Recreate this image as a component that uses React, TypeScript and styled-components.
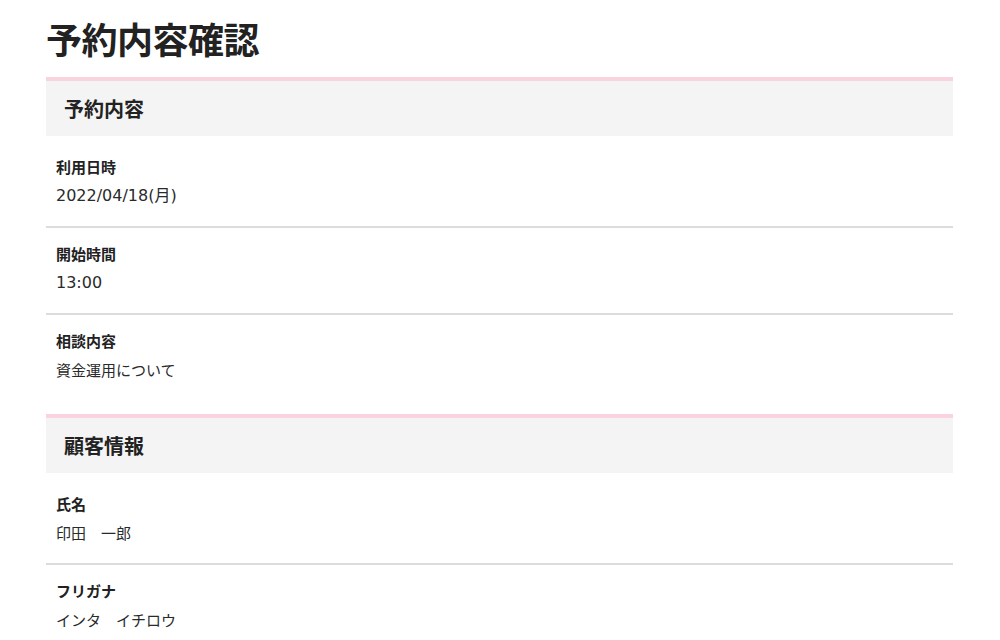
import React from "react";
import styled, { createGlobalStyle } from "styled-components";

const GlobalStyle = createGlobalStyle`
  html, body {
    margin: 0;
    padding: 0;
    background: #ffffff;
  }
  body {
    font-family: "Noto Sans CJK JP", "Noto Sans", sans-serif;
    color: #222222;
  }
`;

const Page = styled.main`
  padding: 13px 47px 0 46px;
`;

const Title = styled.h1`
  margin: 0 0 14px;
  font-size: 36px;
  line-height: 50px;
  font-weight: 700;
  color: #222222;
  letter-spacing: -0.5px;
`;

const Section = styled.section`
  margin-bottom: 14px;
`;

const SectionHeader = styled.h2`
  margin: 0;
  border-top: 4px solid #f9d3dd;
  background: #f4f4f4;
  height: 55px;
  display: flex;
  align-items: center;
  padding: 0 18px;
  font-size: 20px;
  font-weight: 700;
  color: #222222;
`;

const RowList = styled.dl`
  margin: 0;
  padding-top: 5px;
`;

const Row = styled.div`
  padding: 13px 10px 14px;
  border-bottom: 2px solid #dcdcdc;
  &:last-child {
    border-bottom: none;
  }
`;

const Label = styled.dt`
  margin: 0;
  font-size: 15px;
  line-height: 26px;
  font-weight: 700;
  color: #222222;
`;

const Value = styled.dd<{ $numeric?: boolean }>`
  margin: 0;
  font-family: ${(p) =>
    p.$numeric
      ? `"DejaVu Sans", "Noto Sans CJK JP", sans-serif`
      : `"Noto Sans CJK JP", "Noto Sans", sans-serif`};
  font-size: ${(p) => (p.$numeric ? "16px" : "15px")};
  line-height: 32px;
  font-weight: 400;
  color: #2a2a2a;
`;

type Item = { label: string; value: string; numeric?: boolean };

const reservation: Item[] = [
  { label: "利用日時", value: "2022/04/18(月)", numeric: true },
  { label: "開始時間", value: "13:00", numeric: true },
  { label: "相談内容", value: "資金運用について" },
];

const customer: Item[] = [
  { label: "氏名", value: "印田　一郎" },
  { label: "フリガナ", value: "インタ　イチロウ" },
];

function InfoSection({ title, items }: { title: string; items: Item[] }) {
  return (
    <Section>
      <SectionHeader>{title}</SectionHeader>
      <RowList>
        {items.map((it) => (
          <Row key={it.label}>
            <Label>{it.label}</Label>
            <Value $numeric={it.numeric}>{it.value}</Value>
          </Row>
        ))}
      </RowList>
    </Section>
  );
}

export default function App() {
  return (
    <>
      <GlobalStyle />
      <Page>
        <Title>予約内容確認</Title>
        <InfoSection title="予約内容" items={reservation} />
        <InfoSection title="顧客情報" items={customer} />
      </Page>
    </>
  );
}
